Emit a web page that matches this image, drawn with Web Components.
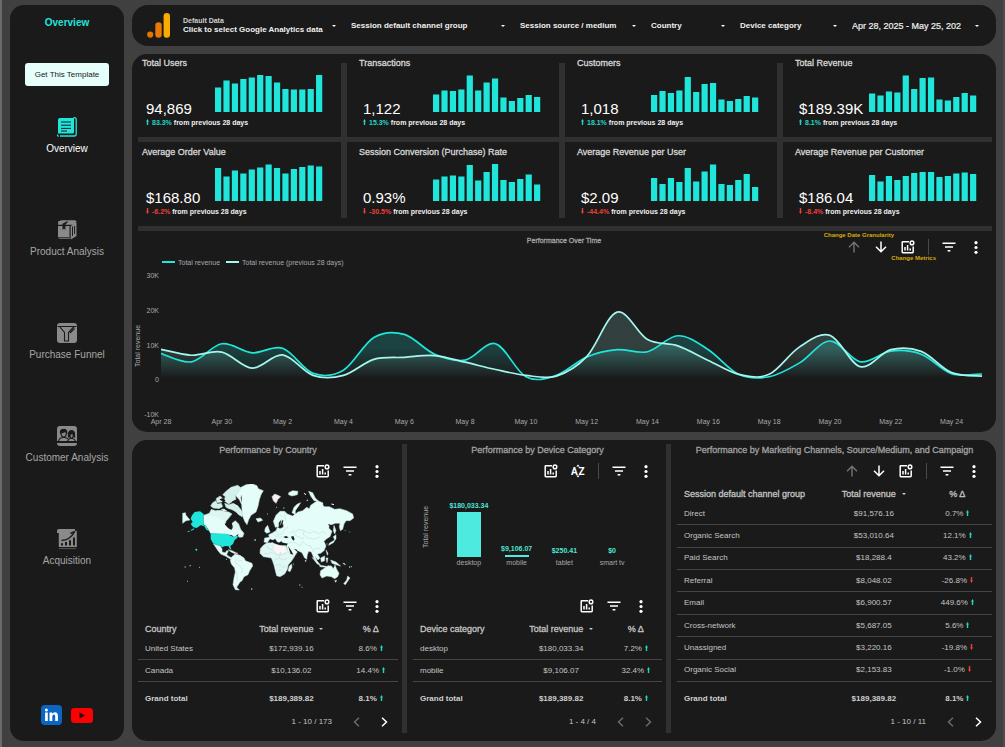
<!DOCTYPE html>
<html lang="en">
<head>
<meta charset="utf-8">
<title>Overview - Ecommerce analytics report</title>
<style>
  html { background: #404040; }
  body {
    margin: 0;
    border-left: 2px solid #6a6a6a;
    border-right: 2px solid #4c4c4c;
    font-family: "Liberation Sans", Arial, sans-serif;
    color: #e0e0e0;
    --panel: #1a1a1a;
    --line: #303030;
    --accent: #20e5da;
    --up: #1fd8c4;
    --down: #ee4035;
  }
</style>
</head>
<body>
<analytics-report></analytics-report>

<script>
const ICONS = {
  up: '<svg width="12" height="12" viewBox="0 0 12 12" fill="none" stroke="#757575" stroke-width="1.4"><path d="M6 11.5V1.2M1 6.2 6 1.2l5 5"/></svg>',
  down: '<svg width="12" height="12" viewBox="0 0 12 12" fill="none" stroke="#fff" stroke-width="1.5"><path d="M6 .5v10.3M1 5.8l5 5 5-5"/></svg>',
  metric: '<svg width="14" height="14" viewBox="0 0 14 14" fill="none" stroke="#fff" stroke-width="1.5"><path d="M8 1.7H1.9q-.7 0-.7.7v9.7q0 .7.7.7h9.6q.7 0 .7-.7V6.6M4 7v3.6M6.6 5v5.6M9.2 8.4v2.2"/><circle cx="11" cy="2.9" r="1.8"/></svg>',
  filter: '<svg width="14" height="10" viewBox="0 0 14 10" fill="none" stroke="#fff" stroke-width="1.5"><path d="M.5 1.2h13M3 5h8M5.6 8.8h2.8"/></svg>',
  more: '<svg width="4" height="13" viewBox="0 0 4 13" fill="#fff"><circle cx="2" cy="1.7" r="1.6"/><circle cx="2" cy="6.5" r="1.6"/><circle cx="2" cy="11.3" r="1.6"/></svg>',
  sort: '<svg width="14" height="14" viewBox="0 0 14 14" fill="#fff"><path d="M5.2 2.6 7 .6l1.8 2zM5.2 11.4l1.8 2 1.8-2z"/><text x="0" y="10.6" font-family="Roboto, sans-serif" font-weight="700" font-size="10">A</text><text x="7.6" y="10.6" font-family="Roboto, sans-serif" font-weight="700" font-size="10">Z</text></svg>'
};
const NAMES = { up: 'Drill up', down: 'Drill down', metric: 'Optional metrics', filter: 'Filter', more: 'More options', sort: 'Sort' };
const ARROW_UP = '<svg class="arr" width="3" height="6" viewBox="0 0 3 6"><path fill="var(--up)" d="M1.5 0 3 2.4H2.2V6H.8V2.4H0z"/></svg>';
const ARROW_DOWN = '<svg class="arr" width="3" height="6" viewBox="0 0 3 6"><path fill="var(--down)" d="M1.5 6 0 3.6H.8V0h1.4v3.6H3z"/></svg>';
const arrowFor = pct => pct.startsWith('-') ? ARROW_DOWN : ARROW_UP;

class Base extends HTMLElement {
  connectedCallback() {
    if (this.shadowRoot) return;
    this.attachShadow({ mode: 'open' }).innerHTML = this.view();
  }
}

customElements.define('tool-bar', class extends Base {
  view() {
    const items = this.getAttribute('icons').split(' ').map(n =>
      n === '|' ? '<i></i>' : `<button type="button" aria-label="${NAMES[n]}">${ICONS[n]}</button>`).join('');
    return `<style>
      :host { display: flex; justify-content: flex-end; align-items: center; height: 26px; }
      button { width: 27px; height: 26px; padding: 0; border: 0; background: none; display: grid; place-items: center; cursor: pointer; }
      i { width: 1px; height: 16px; margin: 0 6px 0 7px; background: #4a4a4a; }
      svg { display: block; }
    </style>${items}`;
  }
});

const NAV_ICONS = {
  overview: `<path fill="var(--accent)" d="M1 3q0-2 2-2h14v14q0 1.500-1.500 1.500H1z"/>
    <path stroke="#1a1a1a" stroke-width="1" d="M4 5h10M4 8.200h10M4 11.400h10M4 14h6"/>
    <path fill="none" stroke="var(--accent)" stroke-width="1.300" d="M16.500.700h1.500l1.200 1.200V17q0 2-2 2H3M.600 17.600v1l1 1"/>`,
  product: `<path fill="#8a8a8a" d="M1.200 1.200 5 .300h13l1.800 1.200-3 3.200H1zM1 6h11.500v13H3q-2 0-2-2zM13.700 6 19.500 2.500V16l-5.800 3.500z"/>
    <path fill="#1a1a1a" d="m5.500 3.800 4-2.200h2L8.400 4.600V10L7 8.600 5.500 10z"/>
    <path stroke="#1a1a1a" fill="none" d="M1 17.800h11M15.500 6.500v9.500M17.600 6v8"/>`,
  funnel: `<rect width="20" height="20" rx="3" fill="#8a8a8a"/>
    <path fill="none" stroke="#1a1a1a" stroke-width="1.100" d="M.500 3.500h19M2.500 3.500 7.500 9.500V18h4V9.500l5.700-6M13 10l4.500-4.500"/>`,
  people: `<path fill="#8a8a8a" d="M3 0h14q3 0 3 3v12H0V3q0-3 3-3zM0 17h20q0 3-3 3H3q-3 0-3-3z"/>
    <g fill="none" stroke="#1a1a1a" stroke-width="1.200"><path fill="#1a1a1a" d="M3.500 7Q3 3.500 6.500 3.300 10 3 9.700 7l-1.500-1.600Q6 6.500 3.500 7z"/><path d="M4 7q.300 4 2.700 4T9.400 7M1.500 15.500q.500-3.500 4-4h2.400q2 .300 2.900 1.500"/>
    <path fill="#1a1a1a" d="M11.500 11V7.500q.500-3 3-3t3 3V11l-1-.500V8h-3.600v2.500z"/><path d="M12.500 9q.500 3.300 2 3.300t2-3.300M10.500 15.500q.300-2.500 3-3h2q2.500.500 3 3"/></g>`,
  growth: `<path fill="#8a8a8a" d="M0 2q0-2 2-2h16v2.500l1.800-1V18H1.800V4H0z"/>
    <path fill="#1a1a1a" d="M4 16.500v-2.300h2v2.300zM8 16.500V13h2v3.500zM12 16.500v-5.300h2v5.300zM16 16.500V8.500h2v8z"/>
    <path fill="none" stroke="#1a1a1a" stroke-width="1.500" d="M4.500 11.500Q13 11 17.500 3M13.500 4.500 17.800 2.400"/>
    <path stroke="#555" d="M2 19.600h17"/>`
};

customElements.define('nav-item', class extends Base {
  view() {
    return `<style>
      :host { display: block; }
      a { display: flex; flex-direction: column; align-items: center; gap: 5px; color: #a6a6a6; text-decoration: none; font-size: 10px; line-height: 14px; white-space: nowrap; }
      :host([current]) a { color: #fff; }
      svg { display: block; overflow: visible; }
    </style>
    <a href="#${this.getAttribute('icon')}"><svg width="20" height="20" viewBox="0 0 20 20">${NAV_ICONS[this.getAttribute('icon')]}</svg><slot></slot></a>`;
  }
});

customElements.define('side-nav', class extends Base {
  view() {
    return `<style>
      :host { display: flex; flex-direction: column; align-items: center; background: var(--panel); border-radius: 14px; padding: 11px 0 16px; box-sizing: border-box; }
      h1 { margin: 0; font-size: 10px; line-height: 14px; color: var(--accent); }
      button { margin: 33px 0 31px; width: 84px; height: 23px; padding: 0; border: 0; border-radius: 3px; background: #e6fffb; color: #1a1a1a; font: 8px/12px "Liberation Sans", sans-serif; }
      nav { display: flex; flex-direction: column; gap: 64px; }
      .social { margin-top: auto; display: flex; gap: 9px; align-items: center; }
      .social a, .social svg { display: block; }
    </style>
    <h1>Overview</h1>
    <button type="button">Get This Template</button>
    <nav>
      <nav-item icon="overview" current>Overview</nav-item>
      <nav-item icon="product">Product Analysis</nav-item>
      <nav-item icon="funnel">Purchase Funnel</nav-item>
      <nav-item icon="people">Customer Analysis</nav-item>
      <nav-item icon="growth">Acquisition</nav-item>
    </nav>
    <div class="social">
      <a href="#linkedin" aria-label="LinkedIn"><svg width="21" height="20" viewBox="0 0 21 20"><rect width="21" height="20" rx="4" fill="#0a66c2"/><g fill="#fff"><circle cx="5.400" cy="4.900" r="1.500"/><path d="M4.100 7.500h2.700v8.500H4.100zM8.500 7.500H11v1.200q.900-1.500 2.900-1.500 3 0 3 3.600V16h-2.700v-4.700q0-1.900-1.300-1.900-1.600 0-1.600 2V16H8.500z"/></g></svg></a>
      <a href="#youtube" aria-label="YouTube"><svg width="22" height="15" viewBox="0 0 22 15"><rect width="22" height="15" rx="3.500" fill="#f00"/><path fill="#1a1a1a" d="M8.500 4.300 14 7.500l-5.500 3.200z"/></svg></a>
    </div>`;
  }
});

customElements.define('filter-control', class extends Base {
  view() {
    const label = this.getAttribute('label'), over = this.getAttribute('over');
    const field = this.hasAttribute('date')
      ? `<button type="button">${label}</button>`
      : `<select id="f" aria-label="${over || label}"><option>${label}</option></select>`;
    return `<style>
      :host { display: flex; align-items: center; min-width: 0; padding: 0 7px 0 8px; box-sizing: border-box; }
      div { flex: 1; min-width: 0; display: flex; flex-direction: column; }
      label { font-size: 7px; line-height: 8px; font-weight: 700; color: #cfcfcf; }
      select, button { appearance: none; width: 100%; margin: 0; padding: 0; border: 0; background: none; color: #f0f0f0; font: 700 8px/10px "Liberation Sans", sans-serif; text-align: left; white-space: nowrap; overflow: hidden; }
      button { font-weight: 400; font-size: 9px; -webkit-text-stroke: .2px; }
      option { color: #111; }
      i { border: 2px solid transparent; border-top-color: #fff; border-bottom: 0; }
    </style><div>${over ? `<label for="f">${over}</label>` : ''}${field}</div><i></i>`;
  }
});

customElements.define('filter-bar', class extends Base {
  view() {
    return `<style>
      :host { display: grid; grid-template-columns: 43px 168fr 169fr 131fr 89fr 112fr 142fr; align-items: center; height: 41px; padding-right: 10px; box-sizing: border-box; background: var(--panel); border-radius: 16px; }
      svg { display: block; justify-self: end; margin-right: 5px; }
    </style>
    <svg width="23" height="25" viewBox="0 0 23 25" role="img" aria-label="Google Analytics"><circle cx="3.200" cy="21.600" r="3.100" fill="#e37400"/><rect x="8.300" y="9.200" width="6.400" height="15.500" rx="3.200" fill="#e8780a"/><rect x="16.600" y="0" width="6.400" height="24.700" rx="3.200" fill="#f9ab00"/></svg>
    <filter-control over="Default Data" label="Click to select Google Analytics data"></filter-control>
    <filter-control label="Session default channel group"></filter-control>
    <filter-control label="Session source / medium"></filter-control>
    <filter-control label="Country"></filter-control>
    <filter-control label="Device category"></filter-control>
    <filter-control date label="Apr 28, 2025 - May 25, 202"></filter-control>`;
  }
});

customElements.define('kpi-card', class extends Base {
  view() {
    const bars = this.getAttribute('bars').split(',').map((h, i) =>
      `<rect x="${(i * 8.42).toFixed(2)}" y="${37 - h}" width="6.2" height="${h}"/>`).join('');
    const pct = this.getAttribute('delta');
    return `<style>
      :host { display: block; padding: 3px 18px 0 12px; min-width: 0; box-sizing: border-box; }
      h2 { margin: 0; font-size: 9px; font-weight: 400; -webkit-text-stroke: .3px; line-height: 12px; color: #d8d8d8; white-space: nowrap; }
      .body { display: flex; justify-content: space-between; align-items: flex-start; }
      .text { margin: 31px 0 0 4px; width: 0; white-space: nowrap; }
      .value { font-size: 15px; line-height: 18px; color: #fff; }
      .delta { font-size: 7px; line-height: 10px; font-weight: 700; color: #f0f0f0; }
      .delta b { color: ${pct.startsWith('-') ? 'var(--down)' : 'var(--up)'}; }
      .arr { margin-right: 3px; }
      .spark { display: block; margin-top: 6px; fill: var(--accent); }
    </style>
    <h2><slot></slot></h2>
    <div class="body">
      <div class="text">
        <div class="value">${this.getAttribute('value')}</div>
        <div class="delta"><b>${arrowFor(pct)}${pct}</b> from previous 28 days</div>
      </div>
      <svg class="spark" width="108" height="37" viewBox="0 0 108 37" aria-hidden="true">${bars}</svg>
    </div>`;
  }
});

customElements.define('kpi-grid', class extends Base {
  view() {
    return `<style>
      :host { display: grid; grid-template-columns: 203fr 6px 212fr 6px 212fr 6px 209fr; grid-template-rows: 83px 5px 76px; padding: 0 4px 0 6px; }
      .v { background: var(--line); grid-row: 1 / 4; margin-top: 9px; }
      .v:nth-of-type(1) { grid-column: 2; } .v:nth-of-type(2) { grid-column: 4; } .v:nth-of-type(3) { grid-column: 6; }
      .h { background: var(--line); grid-row: 2; grid-column: 1 / -1; }
      .r1 { grid-row: 1; } .r2 { grid-row: 3; padding-top: 4px; }
      .c1 { grid-column: 1; padding-left: 4px; } .c2 { grid-column: 3; } .c3 { grid-column: 5; } .c4 { grid-column: 7; padding-right: 15px; }
    </style>
    <div class="v"></div><div class="v"></div><div class="v"></div><div class="h"></div>
    <kpi-card class="r1 c1" value="94,869" delta="83.3%" bars="24.5,31.5,28.5,33,34.5,37,36,29.5,23,22.5,22.5,23,37">Total Users</kpi-card>
    <kpi-card class="r1 c2" value="1,122" delta="15.3%" bars="17.5,21.5,21,22.5,36.5,21.5,29.5,33.5,14.5,11,14,17,15">Transactions</kpi-card>
    <kpi-card class="r1 c3" value="1,018" delta="18.1%" bars="17,21,19,21.5,35,20,28,29,12.5,11,13,16,14.5">Customers</kpi-card>
    <kpi-card class="r1 c4" value="$189.39K" delta="8.1%" bars="18.5,16.5,20.5,19.5,36.5,23,34,34.5,12.5,11.5,15,19,16.5">Total Revenue</kpi-card>
    <kpi-card class="r2 c1" value="$168.80" delta="-6.2%" bars="33,24.5,30.5,27.5,31.5,33.5,36.5,33,27.5,32,34,35.5,34.5">Average Order Value</kpi-card>
    <kpi-card class="r2 c2" value="0.93%" delta="-30.5%" bars="21.5,24.5,25.5,24.5,36,20.5,29,37,21,19,22,26.5,16.5">Session Conversion (Purchase) Rate</kpi-card>
    <kpi-card class="r2 c3" value="$2.09" delta="-44.4%" bars="23,17,23,19,33,19.5,29.5,36.5,17,16,21,27,14">Average Revenue per User</kpi-card>
    <kpi-card class="r2 c4" value="$186.04" delta="-8.4%" bars="26,19.5,25,21,25,28,29,29,24,25,27.5,28.5,27">Average Revenue per Customer</kpi-card>`;
  }
});

// Daily revenue in thousands, Apr 28 to May 25, and the 28 days before.
const REVENUE = [7.7,5.3,10.5,7.9,9.2,2,2.9,12.3,13.2,7.5,5.8,10.5,1,1.4,6.7,8.8,8.2,12.8,8.8,1.7,1,5,11.3,5.3,8.4,7.5,1.9,1.8];
const PREVIOUS = [8.9,7.2,8.1,3.5,7.3,1.4,1.4,6,6.6,7.1,5.2,3.1,1.4,1.2,6.8,19.6,11.7,9.9,5.7,1.7,1.7,9.6,12.9,3.9,8.8,8.3,2.2,1.2];

function smooth(values) {
  const p = values.map((v, i) => [i * 30, (30 - v) * 3.475]);
  let d = `M${p[0]}`;
  for (let i = 0; i < p.length - 1; i++) {
    const a = p[i - 1] || p[i], b = p[i], c = p[i + 1], e = p[i + 2] || c;
    d += `C${b[0] + (c[0] - a[0]) / 6} ${b[1] + (c[1] - a[1]) / 6} ${c[0] - (e[0] - b[0]) / 6} ${c[1] - (e[1] - b[1]) / 6} ${c[0]} ${c[1]}`;
  }
  return d;
}

customElements.define('revenue-chart', class extends Base {
  view() {
    const cur = smooth(REVENUE), prev = smooth(PREVIOUS);
    const days = ['Apr 28','Apr 30','May 2','May 4','May 6','May 8','May 10','May 12','May 14','May 16','May 18','May 20','May 22','May 24'];
    return `<style>
      :host { display: block; padding: 3px 0 5px; font-size: 7px; color: #a8a8a8; }
      header { display: grid; grid-template-rows: 22px 12px; grid-template-columns: 1fr; position: relative; }
      h2 { grid-area: 1 / 1; margin: 0; text-align: center; font-size: 7px; font-weight: 400; -webkit-text-stroke: .3px; line-height: 13px; color: #a2a2a2; }
      tool-bar { grid-area: 1 / 1 / 3; justify-self: end; align-self: start; margin-right: 7px; }
      .legend { grid-area: 2 / 1; justify-self: start; display: flex; gap: 6px; padding-left: 30px; line-height: 13px; }
      .legend span { display: flex; align-items: center; gap: 3px; }
      .legend span::before { content: ""; width: 13px; height: 2px; background: var(--accent); }
      .legend .p::before { background: #a5f7ee; }
      .note { position: absolute; font-size: 6px; line-height: 7px; font-weight: 700; color: #d9a90a; }
      .n1 { right: 102px; top: -2px; } .n2 { right: 60px; top: 21px; }
      .plot { display: grid; grid-template-columns: 12px 17px 1fr; margin: 8px 14px 0 0; }
      .yt { writing-mode: vertical-rl; transform: rotate(180deg); justify-self: center; text-align: center; line-height: 10px; }
      .ticks { display: flex; flex-direction: column; justify-content: space-between; align-items: flex-end; margin: -5px 2px -5px 0; line-height: 10px; }
      svg { display: block; width: 100%; height: 139px; overflow: visible; }
      path { vector-effect: non-scaling-stroke; }
      .days { grid-column: 3; margin: 2px 0 0 calc(-100% / 27); display: grid; grid-template-columns: repeat(14, 1fr); text-align: center; line-height: 10px; }
    </style>
    <header>
      <h2>Performance Over Time</h2>
      <tool-bar icons="up down metric | filter more"></tool-bar>
      <div class="legend"><span>Total revenue</span><span class="p">Total revenue (previous 28 days)</span></div>
      <div class="note n1">Change Date Granularity</div>
      <div class="note n2">Change Metrics</div>
    </header>
    <div class="plot">
      <div class="yt">Total revenue</div>
      <div class="ticks"><span>30K</span><span>20K</span><span>10K</span><span>0</span><span>-10K</span></div>
      <svg viewBox="0 0 810 139" preserveAspectRatio="none" aria-hidden="true">
        <defs>
          <linearGradient id="a" gradientUnits="userSpaceOnUse" x1="0" y1="0" x2="0" y2="102"><stop offset=".7" stop-color="#20e5da" stop-opacity=".2"/><stop offset="1" stop-color="#20e5da" stop-opacity="0"/></linearGradient>
          <linearGradient id="b" gradientUnits="userSpaceOnUse" x1="0" y1="0" x2="0" y2="102"><stop offset=".7" stop-color="#a5f7ee" stop-opacity=".17"/><stop offset="1" stop-color="#a5f7ee" stop-opacity="0"/></linearGradient>
        </defs>
        <path fill="url(#a)" d="${cur}V104H0z"/><path fill="url(#b)" d="${prev}V104H0z"/>
        <path fill="none" stroke="#20e5da" stroke-width="1.700" d="${cur}"/>
        <path fill="none" stroke="#a5f7ee" stroke-width="1.700" d="${prev}"/>
      </svg>
      <div class="days">${days.map(d => `<span>${d}</span>`).join('')}</div>
    </div>`;
  }
});

customElements.define('world-map', class extends Base {
  view() {
    return `<style>
      :host { display: flex; justify-content: center; height: 109px; }
      svg { display: block; }
    </style>
    <svg width="185" height="109" viewBox="0 28 555 327" role="img" aria-label="Revenue by country">
      <g fill="#e4fdf9" stroke="#c9e6e2" stroke-width="1.500" stroke-linejoin="round">
        <path d="M187 48 195 38 210 30 228 27 243 33 247 42 262 48 255 60 250 75 246 95 240 112 225 122 218 135 213 150 206 140 200 125 198 105 197 90 190 75 178 62z"/>
        <path fill="#d3f0eb" d="M150 50 165 38 185 32 196 40 188 52 178 62 180 74 170 80 158 88 144 78 148 66 140 60zM120 72 132 64 142 72 138 82 124 84zM110 84 120 78 124 88 136 86 140 96 128 102 112 100 104 94zM146 86 158 90 172 86 184 92 194 104 202 116 198 126 188 120 180 112 170 106 160 104 150 98zM136 104 148 102 152 108 142 110z"/>
        <path fill="#dcf7f2" d="M83 122 100 116 106 104 118 108 130 106 145 110 158 112 168 118 160 128 150 140 148 152 160 160 164 168 170 160 168 146 178 138 188 148 194 164 204 176 200 187 190 188 184 182 174 187 168 181 150 177 104 176 96 160 88 150 83 148z"/>
        <path d="M84 123 118 124 140 136 148 152 158 162 172 164 190 166 200 178 184 180 170 180 104 175 92 156 84 148z" stroke="none"/>
        <path d="M20 116 28 114 30 122 42 136 30 138 20 146z"/>
        <path d="M112 207 122 211 132 213 138 222 138 232 148 234 152 228 157 229 152 240 160 246 170 250 164 254 148 244 134 238 126 228 118 216z"/>
        <path fill="#fbeef0" d="M156 225 168 228 180 234 186 236 176 237 164 231zM288 66 296 58 306 62 314 66 306 74 300 86 292 78z"/>
        <path d="M168 246 178 238 192 242 204 250 208 258 228 266 230 274 221 288 216 300 204 306 198 318 192 322 186 332 182 338 190 346 178 345 171 330 174 310 178 292 176 280 166 268 163 258z"/>
        <path d="M240 132 254 130 260 137 246 142zM338 54 350 48 366 50 364 60 348 64 338 60zM398 50 410 54 418 70 428 80 414 78 404 64zM348 114 354 98 364 88 374 84 368 94 358 108 358 120zM268 160 275 152 279 164 282 172 272 176 266 170z"/>
        <path d="M292 140 300 122 312 110 326 110 334 118 350 124 366 112 380 108 392 98 400 102 404 92 424 78 440 84 444 96 460 96 476 104 492 102 512 108 530 118 533 130 522 138 510 138 504 148 500 164 493 168 490 156 492 146 478 146 462 152 458 160 468 170 462 186 452 192 444 200 450 214 444 228 434 236 424 238 432 250 426 256 418 246 424 262 416 256 406 232 398 230 394 240 392 254 386 250 378 234 366 228 354 222 364 232 356 244 344 250 336 232 332 214 336 206 320 206 316 198 310 204 304 202 298 192 290 196 282 192 274 204 264 202 266 190 280 188 278 180 290 174 300 168 304 158 312 162 322 158 322 148 314 150 316 134 308 144 308 156 298 158z"/>
        <path fill="#dff8f3" d="M262 212 272 205 290 203 296 210 312 213 330 213 336 228 344 246 356 245 346 260 337 270 334 284 326 298 312 306 302 303 298 288 294 272 290 260 286 250 274 248 262 246 252 236 253 222z"/>
        <path fill="#fdf4f5" d="M292 206 314 213 328 215 332 232 320 238 306 240 292 228z"/>
        <path d="M340 274 347 268 348 278 342 291 336 288zM388 256l3 3-3 2z"/>
        <path d="M476 196 472 186 480 180 480 192 472 204 458 212 460 206zM474 152 480 168 476 178 472 168zM408 248 424 260 434 272 424 268zM434 250 446 244 446 258 436 262zM430 272 452 275 450 278 432 276zM450 250 456 250 453 264zM450 226 456 236 454 242zM464 256 480 262 494 274 480 270 468 266zM500 266 508 270M456 276l8 0"/>
        <path d="M434 288 446 280 456 273 466 274 472 282 477 271 482 284 489 296 485 306 476 312 466 306 452 304 438 310 432 300zM476 318 482 317 479 323zM515 304 522 310 516 318 508 330 503 327 512 316z"/>
        <path fill="none" stroke="#e4fdf9" stroke-width="3" d="M26 277h3M41 273h3M69 278h2M34 320h2M225 343h4M370 331h3M377 338h2M235 196h5M150 254h2M300 98h2M274 118h2M384 56l6 4M392 78l4-2M466 88l8 2M502 266l6 3M519 277h4M526 276h2M352 268h2M452 208h2M322 100h3"/>
      </g>
      <g fill="none" stroke="#bcd6d2" stroke-width="1.500">
        <path d="M358 172 368 164 384 168 400 176 414 170 430 178 440 170 452 178M384 168 382 180 396 190 414 194 430 186M340 176 352 168 358 182 372 190 384 192M336 206 350 202 362 206 372 214M380 200 390 210 404 214 410 226M306 182 320 176 326 164 336 158M290 176 298 184 310 188 322 184M300 168 306 182M312 118 320 128M326 112 328 138M408 232 420 220 432 222M372 214 380 200"/>
        <path d="M270 212 278 222 290 226M264 236 276 238 290 232 300 240 320 240 334 234M296 256 310 250 322 256 334 250M298 272 312 270 322 280 332 272M310 250 314 232M308 288 318 286M182 252 176 264 190 272 200 284 196 296M186 260 200 256M182 292 184 318"/>
      </g>
      <g fill="var(--accent)">
        <path d="M48 122 56 112 72 110 83 118V150L92 156 99 168 92 166 84 154 74 152 62 160 52 158 44 148 50 142 44 132zM34 171l6-3 2 2-6 3zM44 166l10-5 1 3-9 4z"/>
        <path d="M104 176 150 177 158 180 166 184 174 188 186 181 184 190 176 196 171 208 163 214 166 226 160 221 158 215 148 214 138 218 132 212 120 210 110 204 104 192z"/>
        <circle cx="61" cy="225" r="3"/><path d="M506 167h3v2h-3zM518 171h5v2h-5z"/>
      </g>
      <g fill="var(--panel)">
        <path d="M146 148 156 142 167 146 170 156 166 166 156 160zM180 182l8-3-3 5zM322 187 330 184 338 188 330 191zM345 186 352 184 356 194 352 198 348 192zM282 199 296 196 304 204 316 203 332 207 330 211 306 209 292 202 280 204zM336 214 346 228 352 240 344 238zM354 222 364 226 362 229zM318 138 322 136 318 156 314 152z"/>
        <path d="M130 74l12-4 6 8-6 4zM168 80l14-4 6 10-6 4zM196 60l2 26-4-16zM138 96l10 4 20 6-2 4-18-5zM120 102l14 2-2 3-12-2zM456 148l12 4-6 6zM442 88l4 6-6-4z"/>
      </g>
    </svg>`;
  }
});

customElements.define('device-chart', class extends Base {
  view() {
    const rows = [['desktop', '$180,033.34', 45], ['mobile', '$9,106.07', 2], ['tablet', '$250.41', 0], ['smart tv', '$0', 0]];
    return `<style>
      :host { display: flex; gap: 13px; height: 109px; padding: 0 26px 24px 7px; box-sizing: border-box; font-size: 7px; color: #a8a8a8; }
      .yt { writing-mode: vertical-rl; transform: rotate(180deg); width: 12px; line-height: 12px; text-align: center; }
      .cols { flex: 1; display: grid; grid-template-columns: repeat(4, 1fr); }
      .col { display: flex; flex-direction: column; justify-content: flex-end; align-items: center; line-height: 12px; }
      b { font-size: 7px; line-height: 12px; color: #4fe3d2; }
      i { width: 24px; background: #4deae0; }
    </style>
    <div class="yt">Total revenue</div>
    <div class="cols">${rows.map(r => `<div class="col"><b>${r[1]}</b><i style="height:${r[2]}px"></i><span>${r[0]}</span></div>`).join('')}</div>`;
  }
});

const TABLES = {
  country: { head: 'Country', cols: [39, 40, 21], pages: '1 - 10 / 173', next: true,
    rows: [['United States', '$172,939.16', '8.6%'], ['Canada', '$10,136.02', '14.4%']] },
  device: { head: 'Device category', cols: [40, 39, 21], pages: '1 - 4 / 4', next: false,
    rows: [['desktop', '$180,033.34', '7.2%'], ['mobile', '$9,106.07', '32.4%']] },
  channel: { head: 'Session default channel group', cols: [47, 31, 22], pages: '1 - 10 / 11', next: true,
    rows: [['Direct', '$91,576.16', '0.7%'], ['Organic Search', '$53,010.64', '12.1%'], ['Paid Search', '$18,288.4', '43.2%'],
      ['Referral', '$8,048.02', '-26.8%'], ['Email', '$6,900.57', '449.6%'], ['Cross-network', '$5,687.05', '5.6%'],
      ['Unassigned', '$3,220.16', '-19.8%'], ['Organic Social', '$2,153.83', '-1.0%']] }
};

customElements.define('metric-table', class extends Base {
  view() {
    const t = TABLES[this.getAttribute('data')];
    const chev = (d, on) => `<svg width="7" height="10" viewBox="0 0 7 10" fill="none" stroke="${on ? '#fff' : '#6b6b6b'}" stroke-width="1.500"><path d="${d}"/></svg>`;
    return `<style>
      :host { display: flex; flex-direction: column; flex: 1; font-size: 8px; color: #c4c4c4; }
      table { flex: 1; width: 100%; table-layout: fixed; border-collapse: collapse; line-height: 12px; }
      th, td { padding: 0; text-align: center; white-space: nowrap; font-weight: 400; }
      thead th { font-size: 9px; -webkit-text-stroke: .3px; height: 19px; color: #c4c4c4; }
      th:first-child { text-align: left; padding-left: 7px; }
      tbody tr { border-bottom: 1px solid #454545; }
      tbody th, tbody td { height: 21px; }
      tfoot th, tfoot td { height: 34px; font-weight: 700; color: #cfcfcf; }
      .sort { display: inline-block; border: 2px solid transparent; border-top-color: #ccc; border-bottom: 0; margin: 0 0 2px 6px; }
      .arr { margin-left: 3px; }
      footer { display: flex; justify-content: flex-end; align-items: center; height: 12px; line-height: 12px; }
      button { padding: 0; border: 0; background: none; width: 28px; height: 12px; display: grid; place-items: center; }
      footer span { margin-right: 10px; }
    </style>
    <table>
      <colgroup>${t.cols.map(c => `<col style="width:${c}%">`).join('')}</colgroup>
      <thead><tr><th scope="col">${t.head}</th><th scope="col">Total revenue<i class="sort"></i></th><th scope="col">% Δ</th></tr></thead>
      <tbody>${t.rows.map(r => `<tr><th scope="row">${r[0]}</th><td>${r[1]}</td><td>${r[2]}${arrowFor(r[2])}</td></tr>`).join('')}</tbody>
      <tfoot><tr><th scope="row">Grand total</th><td>$189,389.82</td><td>8.1%${ARROW_UP}</td></tr></tfoot>
    </table>
    <footer><span>${t.pages}</span><button type="button" aria-label="Previous page">${chev('M6 .800 1.500 5 6 9.200', false)}</button><button type="button" aria-label="Next page">${chev('M1 .800 5.500 5 1 9.200', t.next)}</button></footer>`;
  }
});

customElements.define('report-column', class extends Base {
  view() {
    return `<style>
      :host { display: flex; flex-direction: column; box-sizing: border-box; padding: 4px 4px 13px 6px; min-width: 0; }
      h2 { margin: 0 0 1px; font-size: 9px; font-weight: 400; -webkit-text-stroke: .3px; line-height: 13px; text-align: center; color: #a2a2a2; white-space: nowrap; }
    </style><h2>${this.getAttribute('heading')}</h2><slot></slot>`;
  }
});

customElements.define('analytics-report', class extends Base {
  view() {
    return `<style>
      :host { display: flex; gap: 8px; padding: 5px 7px 6px 8px; }
      side-nav { flex: 0 0 114px; }
      main { flex: 1; min-width: 0; display: flex; flex-direction: column; gap: 8px; }
      section { background: var(--panel); border-radius: 15px; }
      hr { height: 5px; margin: 8px 4px 0 6px; border: 0; background: var(--line); }
      .bottom { display: grid; grid-template-columns: 270fr 5px 259fr 5px 325fr; }
      .rule { background: var(--line); margin: 4px 0 8px; }
      .t8 { margin-right: 8px; } .t5 { margin-right: 5px; } .t3 { margin-right: 3px; }
    </style>
    <side-nav></side-nav>
    <main>
      <filter-bar></filter-bar>
      <section>
        <kpi-grid></kpi-grid>
        <hr>
        <revenue-chart></revenue-chart>
      </section>
      <section class="bottom">
        <report-column heading="Performance by Country">
          <tool-bar class="t8" icons="metric filter more"></tool-bar>
          <world-map></world-map>
          <tool-bar class="t8" icons="metric filter more"></tool-bar>
          <metric-table data="country"></metric-table>
        </report-column>
        <div class="rule"></div>
        <report-column heading="Performance by Device Category">
          <tool-bar class="t3" icons="metric sort | filter more"></tool-bar>
          <device-chart></device-chart>
          <tool-bar class="t8" icons="metric filter more"></tool-bar>
          <metric-table data="device"></metric-table>
        </report-column>
        <div class="rule"></div>
        <report-column heading="Performance by Marketing Channels, Source/Medium, and Campaign">
          <tool-bar class="t5" icons="up down metric | filter more"></tool-bar>
          <metric-table data="channel"></metric-table>
        </report-column>
      </section>
    </main>`;
  }
});
</script>
</body>
</html>
